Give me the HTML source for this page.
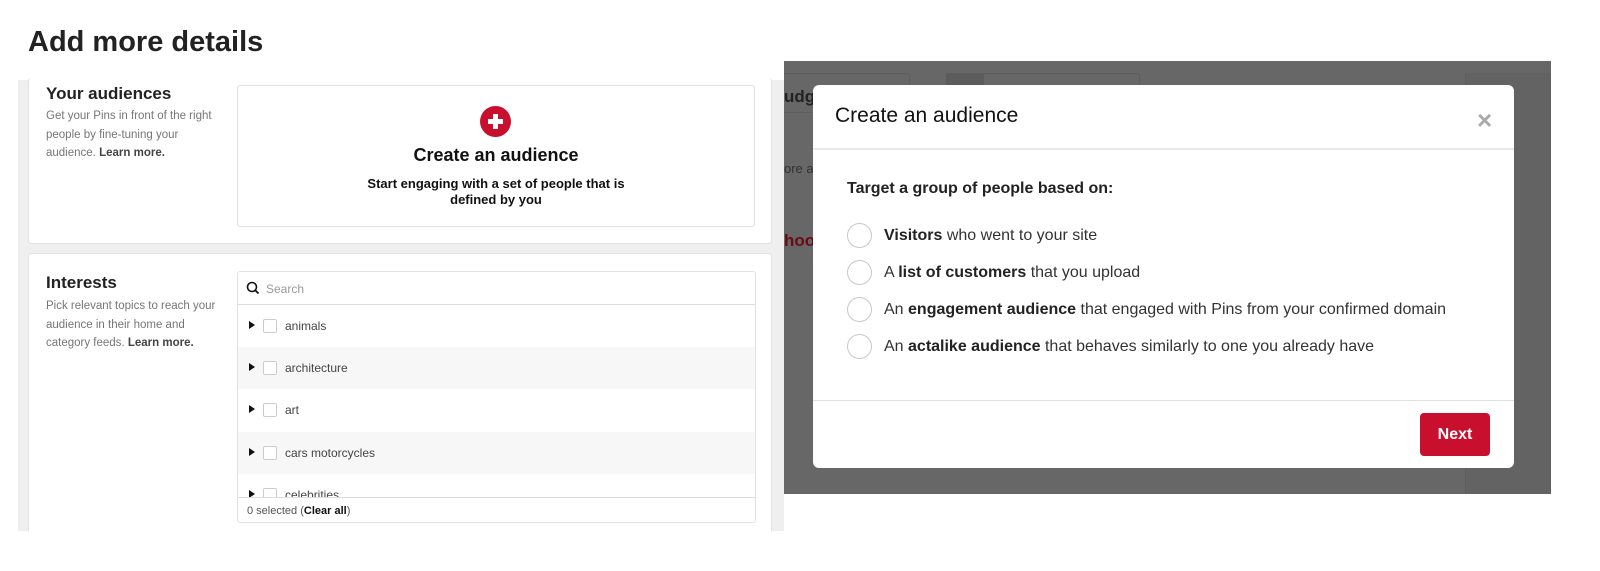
<!DOCTYPE html>
<html><head><style>
*{box-sizing:border-box;margin:0;padding:0}
body{width:1600px;height:564px;background:#fff;font-family:"Liberation Sans",Arial,sans-serif;color:#222;position:relative;overflow:hidden}
.abs{position:absolute}
h1{position:absolute;left:28px;top:26px;font-size:29px;font-weight:bold;color:#222}
.card{position:absolute;background:#fff;border:1px solid #e2e2e2;border-radius:3px}
.sub{font-size:11.5px;color:#767676;line-height:18.5px}
.sub b{color:#444}
.row{position:absolute;left:0;right:0;height:42px;font-size:12px;color:#444}
.row .tri{position:absolute;left:11px;top:16px;width:0;height:0;border-left:6px solid #111;border-top:4.5px solid transparent;border-bottom:4.5px solid transparent}
.row .cb{position:absolute;left:25px;top:14px;width:14px;height:14px;border:1px solid #ccc;border-radius:2px;background:#fff}
.row span{position:absolute;left:47px;top:14px}
.radio{position:absolute;left:34px;width:25px;height:25px;border:1px solid #c8c8c8;border-radius:50%}
.opt{position:absolute;left:71px;font-size:16px;color:#333}
.opt b{color:#222}
</style></head><body>
<h1>Add more details</h1>
<div class="abs" style="left:18px;top:80px;width:766px;height:452px;background:#efefef"></div>
<div class="card" style="left:28px;top:78px;width:744px;height:166px;border-top:none">
  <div class="abs" style="left:17px;top:6px;font-size:17px;font-weight:bold;color:#222">Your audiences</div>
  <div class="abs sub" style="left:17px;top:29px;width:180px">Get your Pins in front of the right people by fine-tuning your audience. <b>Learn more.</b></div>
</div>
<div class="card" style="left:237px;top:85px;width:518px;height:142px">
  <div class="abs" style="left:242px;top:20px;width:31px;height:31px;border-radius:50%;background:#c8102e"></div>
  <div class="abs" style="left:255px;top:28px;width:5px;height:15px;background:#fff"></div>
  <div class="abs" style="left:250px;top:33px;width:15px;height:5px;background:#fff"></div>
  <div class="abs" style="left:0;right:0;top:59px;text-align:center;font-size:18px;font-weight:bold;color:#111">Create an audience</div>
  <div class="abs" style="left:0;right:0;top:90px;text-align:center;font-size:13px;font-weight:bold;color:#111;line-height:16px">Start engaging with a set of people that is<br>defined by you</div>
</div>
<div class="card" style="left:28px;top:253px;width:744px;height:290px;border-bottom:none">
  <div class="abs" style="left:17px;top:19px;font-size:17px;font-weight:bold;color:#222">Interests</div>
  <div class="abs sub" style="left:17px;top:43px;width:180px">Pick relevant topics to reach your audience in their home and category feeds. <b>Learn more.</b></div>
</div>
<div class="abs" style="left:0;top:531px;width:800px;height:40px;background:#fff"></div>
<div class="card" style="left:237px;top:271px;width:519px;height:252px;overflow:hidden">
  <svg class="abs" style="left:8px;top:9px" width="14" height="14" viewBox="0 0 14 14"><circle cx="6" cy="6" r="4.5" fill="none" stroke="#111" stroke-width="1.6"/><line x1="9.2" y1="9.2" x2="12.5" y2="12.5" stroke="#111" stroke-width="1.8"/></svg>
  <div class="abs" style="left:28px;top:10px;font-size:12px;color:#999">Search</div>
  <div class="abs" style="left:0;right:0;top:32px;border-top:1px solid #ddd"></div>
  <div class="row" style="top:33px"><i class="tri"></i><i class="cb"></i><span>animals</span></div>
  <div class="row" style="top:75px;background:#f7f7f7"><i class="tri"></i><i class="cb"></i><span>architecture</span></div>
  <div class="row" style="top:117px"><i class="tri"></i><i class="cb"></i><span>art</span></div>
  <div class="row" style="top:160px;background:#f7f7f7"><i class="tri"></i><i class="cb"></i><span>cars motorcycles</span></div>
  <div class="row" style="top:202px"><i class="tri"></i><i class="cb"></i><span>celebrities</span></div>
  <div class="abs" style="left:0;right:0;top:225px;height:30px;background:#fff;border-top:1px solid #ddd"></div>
  <div class="abs" style="left:9px;top:233px;font-size:11px;color:#555">0 selected (<b style="color:#111">Clear all</b>)</div>
</div>
<div class="abs" style="left:784px;top:61px;width:767px;height:433px;background:#676767">
  <div class="abs" style="left:0;top:12px;width:126px;height:40px;border:1px solid #5e5e5e;border-left:none;border-radius:0 3px 0 0"></div>
  <div class="abs" style="left:0;top:26px;font-size:17px;font-weight:bold;color:#222">udg</div>
  <div class="abs" style="left:0;top:100px;font-size:13px;color:#333">ore a</div>
  <div class="abs" style="left:0;top:170px;font-size:17px;font-weight:bold;color:#6b0a14">hoo</div>
  <div class="abs" style="left:162px;top:12px;width:194px;height:18px;border:1px solid #5e5e5e;border-radius:3px"></div>
  <div class="abs" style="left:162px;top:12px;width:38px;height:18px;background:#5c5c5c"></div>
  <div class="abs" style="left:681px;top:12px;width:86px;height:421px;background:#636363;border-left:1px solid #5e5e5e"></div>
</div>
<div class="abs" style="left:813px;top:85px;width:701px;height:383px;background:#fff;border-radius:6px">
  <div class="abs" style="left:22px;top:19px;font-size:21px;color:#111">Create an audience</div>
  <div class="abs" style="left:664px;top:20px;font-size:26px;color:#aaa;font-weight:bold">×</div>
  <div class="abs" style="left:0;right:0;top:63px;border-top:2px solid #e8e8e8"></div>
  <div class="abs" style="left:34px;top:95px;font-size:16px;font-weight:bold;color:#222">Target a group of people based on:</div>
  <div class="radio" style="top:138px"></div><div class="opt" style="top:142px"><b>Visitors</b> who went to your site</div>
  <div class="radio" style="top:175px"></div><div class="opt" style="top:179px">A <b>list of customers</b> that you upload</div>
  <div class="radio" style="top:212px"></div><div class="opt" style="top:216px">An <b>engagement audience</b> that engaged with Pins from your confirmed domain</div>
  <div class="radio" style="top:249px"></div><div class="opt" style="top:253px">An <b>actalike audience</b> that behaves similarly to one you already have</div>
  <div class="abs" style="left:0;right:0;top:315px;border-top:1px solid #e0e0e0"></div>
  <div class="abs" style="left:607px;top:328px;width:70px;height:43px;background:#c8102e;border-radius:4px;color:#fff;font-weight:bold;font-size:16px;text-align:center;line-height:43px">Next</div>
</div>
</body></html>
